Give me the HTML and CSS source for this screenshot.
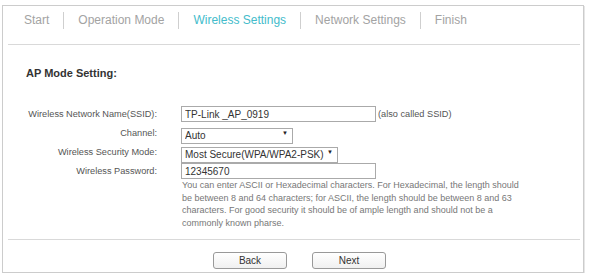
FILE: index.html
```html
<!DOCTYPE html>
<html lang="en">
<head>
    <meta charset="UTF-8">
    <meta name="viewport" content="width=device-width, initial-scale=1.0">
    <title>Quick Setup - Wireless Settings</title>
    <link rel="stylesheet" href="styles.css">
</head>
<body>
    <div class="panel">
        <ul class="steps">
            <li>Start</li>
            <li>Operation Mode</li>
            <li class="active">Wireless Settings</li>
            <li>Network Settings</li>
            <li>Finish</li>
        </ul>
        <div class="divider"></div>

        <h3 class="section-title">AP Mode Setting:</h3>

        <div class="form">
            <div class="row">
                <label for="ssid">Wireless Network Name(SSID):</label>
                <input class="field" id="ssid" type="text" value="TP-Link _AP_0919">
                <span class="hint">(also called SSID)</span>
            </div>
            <div class="row">
                <label for="channel">Channel:</label>
                <div class="select select-channel">
                    <select id="channel">
                        <option>Auto</option>
                    </select>
                </div>
            </div>
            <div class="row">
                <label for="security">Wireless Security Mode:</label>
                <div class="select select-security">
                    <select id="security">
                        <option>Most Secure(WPA/WPA2-PSK)</option>
                    </select>
                </div>
            </div>
            <div class="row last">
                <label for="password">Wireless Password:</label>
                <input class="field" id="password" type="text" value="12345670">
            </div>
            <p class="help">You can enter ASCII or Hexadecimal characters. For Hexadecimal, the length should be between 8 and 64 characters; for ASCII, the length should be between 8 and 63 characters. For good security it should be of ample length and should not be a commonly known pharse.</p>
        </div>

        <div class="divider bottom"></div>

        <div class="buttons">
            <button class="btn">Back</button>
            <button class="btn">Next</button>
        </div>
    </div>
</body>
</html>
```

FILE: styles.css
```css
* {
    margin: 0;
    padding: 0;
    box-sizing: border-box;
}

body {
    font-family: "Liberation Sans", Arial, sans-serif;
    background: #fff;
    color: #555;
}

.panel {
    width: 582px;
    margin: 5px 0 0 2px;
    border: 1px solid #ccc;
    box-shadow: 1px 1px 0 #e6e6e6;
    padding-bottom: 3px;
}

.steps {
    list-style: none;
    display: flex;
    padding: 6px 0 0 7px;
}

.steps li {
    font-size: 12px;
    line-height: 17px;
    color: #a3a3a3;
    padding: 0 14px;
}

.steps li + li {
    border-left: 1px solid #cfcfcf;
}

.steps li.active {
    color: #43bccb;
}

.divider {
    height: 1px;
    background: #d9d9d9;
    margin: 15px 3px 0 5px;
}

.divider.bottom {
    margin-top: 10px;
}

.section-title {
    font-size: 11px;
    line-height: 16px;
    font-weight: bold;
    color: #333;
    margin: 20px 0 0 23px;
}

.form {
    margin-top: 25px;
}

.row {
    display: flex;
    align-items: center;
    height: 16px;
    margin-bottom: 3px;
}

.row.last {
    margin-bottom: 0;
}

.row label {
    width: 154px;
    margin-right: 24px;
    text-align: right;
    font-size: 9.2px;
    color: #555;
    white-space: nowrap;
}

.field {
    width: 195px;
    height: 16px;
    border: 1px solid #aaa;
    padding: 0 3px;
    font-family: inherit;
    font-size: 10px;
    color: #333;
    outline: none;
}

.hint {
    margin-left: 2px;
    font-size: 9.2px;
    color: #555;
}

.select {
    position: relative;
    height: 16px;
}

.select select {
    appearance: none;
    -webkit-appearance: none;
    width: 100%;
    height: 16px;
    border: 1px solid #aaa;
    border-radius: 0;
    background: #fff;
    padding: 0 3px;
    font-family: inherit;
    font-size: 10px;
    color: #333;
    outline: none;
}

.select::after {
    content: "▼";
    position: absolute;
    right: 5px;
    top: 4px;
    font-size: 6px;
    line-height: 8px;
    color: #222;
}

.select-channel {
    width: 112px;
}

.select-security {
    width: 157px;
}

.help {
    margin-left: 179px;
    width: 348px;
    font-size: 9px;
    line-height: 12.5px;
    color: #777;
}

.buttons {
    display: flex;
    gap: 25px;
    padding-left: 210px;
    margin-top: 12px;
}

.btn {
    width: 74px;
    height: 17px;
    border: 1px solid #999;
    border-radius: 3px;
    background: linear-gradient(#fff, #f0f0f0);
    font-family: inherit;
    font-size: 10px;
    color: #333;
    cursor: pointer;
}
```
